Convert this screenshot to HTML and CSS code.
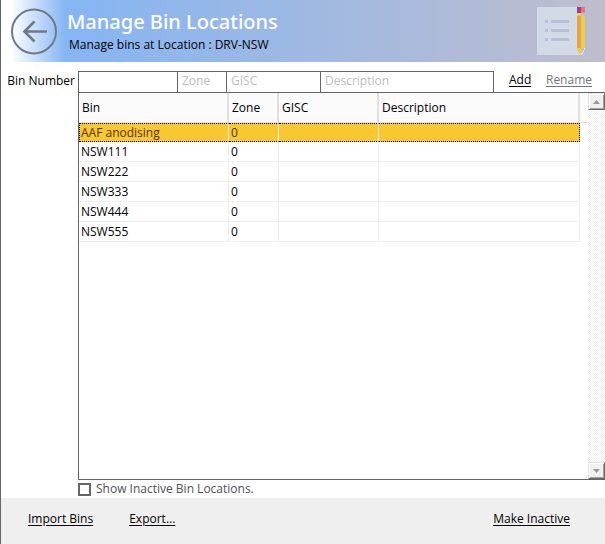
FILE: index.html
```html
<!DOCTYPE html>
<html lang="en">
<head>
    <meta charset="UTF-8">
    <meta name="viewport" content="width=device-width, initial-scale=1.0">
    <title>Manage Bin Locations</title>
    <link rel="stylesheet" href="styles.css">
</head>
<body>

    <div class="header">
        <button class="back" type="button" aria-label="Back">
            <svg width="48" height="48" viewBox="0 0 48 48" fill="none" stroke="#6f7a88">
                <circle cx="24" cy="24.5" r="22" stroke-width="2"/>
                <path d="M37 24.5H15M24.5 14.5L14.5 24.5L24.5 34.5" stroke-width="2.6"/>
            </svg>
        </button>
        <div class="titles">
            <h1>Manage Bin Locations</h1>
            <p>Manage bins at Location : DRV-NSW</p>
        </div>
        <svg class="notepad" width="50" height="48" viewBox="0 0 50 48" shape-rendering="crispEdges">
            <path fill="#d2d9e7" d="M0 0H40V41L43 48H0z"/>
            <path fill="#b9bfd5" d="M8 13h3v3H8zM14 13h18v3H14zM8 22h3v3H8zM14 22h18v3H14zM8 31h3v3H8zM14 31h18v3H14z"/>
            <path fill="#a33c8d" d="M40 0h4v6h-4z"/>
            <path fill="#ea7180" d="M44 0h4v5h-4z"/>
            <path fill="#e58a9c" d="M44 5h4v1h-4z"/>
            <path fill="#e9d044" d="M40 6h4v3h4v32h-4v7h-1l-3-6z"/>
            <path fill="#e8a34b" d="M40 9h4v32h-4z"/>
            <path fill="#eae6dc" d="M47 41h1v2h-1zM46 43h1v2h-1zM45 45h1v2h-1zM44 46h1v2h-1z"/>
        </svg>
    </div>

    <div class="content">
        <form class="bin-form">
            <label for="binNumber">Bin Number</label>
            <div class="fields">
                <input type="text" id="binNumber">
                <input type="text" placeholder="Zone" aria-label="Zone">
                <input type="text" placeholder="GISC" aria-label="GISC">
                <input type="text" placeholder="Description" aria-label="Description">
            </div>
            <div class="form-links">
                <a href="#">Add</a>
                <a href="#" class="disabled">Rename</a>
            </div>
        </form>

        <div class="bin-list">
            <div class="table-area">
                <table>
                    <colgroup>
                        <col class="col-bin">
                        <col class="col-zone">
                        <col class="col-gisc">
                        <col>
                        <col class="col-end">
                    </colgroup>
                    <thead>
                        <tr><th>Bin</th><th>Zone</th><th>GISC</th><th>Description</th><th></th></tr>
                    </thead>
                    <tbody>
                        <tr class="selected"><td>AAF anodising</td><td>0</td><td></td><td></td></tr>
                        <tr><td>NSW111</td><td>0</td><td></td><td></td></tr>
                        <tr><td>NSW222</td><td>0</td><td></td><td></td></tr>
                        <tr><td>NSW333</td><td>0</td><td></td><td></td></tr>
                        <tr><td>NSW444</td><td>0</td><td></td><td></td></tr>
                        <tr><td>NSW555</td><td>0</td><td></td><td></td></tr>
                    </tbody>
                </table>
            </div>
            <div class="scrollbar">
                <button type="button" aria-label="Scroll up">
                    <svg width="7" height="4" viewBox="0 0 7 4"><path d="M0 4L3.5 0L7 4z"/></svg>
                </button>
                <button type="button" aria-label="Scroll down">
                    <svg width="7" height="4" viewBox="0 0 7 4"><path d="M0 0L3.5 4L7 0z"/></svg>
                </button>
            </div>
        </div>

        <div class="inactive">
            <input type="checkbox" id="showInactive">
            <label for="showInactive">Show Inactive Bin Locations.</label>
        </div>
    </div>

    <div class="footer">
        <a href="#">Import Bins</a>
        <a href="#">Export...</a>
        <a href="#" class="right">Make Inactive</a>
    </div>

</body>
</html>
```

FILE: styles.css
```css
* {
    box-sizing: border-box;
}
body {
    display: flex;
    flex-direction: column;
    min-height: 100vh;
    margin: 0;
    border-left: 1px solid #646569;
    background: white;
    color: black;
    font-family: "Open Sans", "Noto Sans", sans-serif;
    font-size: 12px;
    line-height: 16px;
}
a {
    color: black;
    text-underline-offset: 2px;
}
.header {
    display: flex;
    height: 62px;
    padding: 7px 18px 0 9px;
    background: linear-gradient(to right, white 0, white 10px, #85b5f3 64px, #bfbdcd 100%);
}
.back {
    width: 48px;
    height: 48px;
    padding: 0;
    border: none;
    background: none;
    cursor: pointer;
}
.back svg {
    display: block;
}
.titles {
    flex: 1;
    padding: 3px 0 0 9px;
}
h1 {
    margin: 0;
    color: white;
    font-family: "Noto Sans", sans-serif;
    font-size: 20px;
    font-weight: 500;
    line-height: 24px;
}
.titles p {
    margin: 3px 0 0 2px;
}
.content {
    flex: 1;
    display: flex;
    flex-direction: column;
    padding-top: 9px;
}
.bin-form {
    display: flex;
    height: 21px;
}
.bin-form > label {
    width: 77px;
    padding: 2px 3px 0 0;
    text-align: right;
    white-space: nowrap;
}
.fields {
    flex: 1;
    display: grid;
    grid-template-columns: 98px 49px 94px 1fr;
    border: 1px solid #646569;
    border-bottom: none;
}
.fields input {
    min-width: 0;
    padding: 0 4px 3px;
    border: none;
    outline: none;
    background: white;
    font: inherit;
}
.fields input + input {
    border-left: 1px solid #646569;
}
.fields input::placeholder {
    color: #bebebe;
    opacity: 1;
}
.form-links {
    display: flex;
    justify-content: space-between;
    width: 111px;
    padding: 1px 13px 0 15px;
}
.disabled {
    color: #73747a;
}
.bin-list {
    flex: 1;
    display: flex;
    margin-left: 77px;
    border: 1px solid #646569;
    border-right: none;
}
.table-area {
    flex: 1;
}
table {
    width: 100%;
    table-layout: fixed;
    border-collapse: separate;
    border-spacing: 0;
}
.col-bin {
    width: 150px;
}
.col-zone {
    width: 50px;
}
.col-gisc {
    width: 100px;
}
.col-end {
    width: 8px;
}
th {
    height: 30px;
    padding: 0 3px;
    border-right: 2px solid #e0e0e0;
    border-bottom: 1px solid #e6e6e6;
    background: #fbfbfb;
    font-weight: normal;
    text-align: left;
}
th:last-child {
    padding: 0;
    border-right: none;
}
td {
    height: 20px;
    padding: 0 2px;
    border-right: 1px solid #eeeeee;
    border-bottom: 1px solid #eeeeee;
}
.selected td {
    height: 19px;
    border-top: 1px dotted black;
    border-bottom: 1px dotted black;
    background: #f8c832;
    color: #5a3206;
}
.selected td:first-child {
    padding-left: 1px;
    border-left: 1px dotted black;
}
.selected td:last-child {
    border-right: 1px dotted black;
}
.scrollbar {
    display: flex;
    flex-direction: column;
    justify-content: space-between;
    width: 17px;
    background: repeating-conic-gradient(#f0f0f0 0 25%, white 0 50%) 0 0 / 2px 2px;
}
.scrollbar button {
    display: flex;
    align-items: center;
    justify-content: center;
    width: 17px;
    height: 17px;
    padding: 0;
    border: 1px solid;
    border-color: #e3e3e3 #696969 #696969 #e3e3e3;
    box-shadow: inset 1px 1px white, inset -1px -1px #a0a0a0;
    background: #f0f0f0;
}
.scrollbar path {
    fill: #9a9a9a;
}
.inactive {
    display: flex;
    align-items: center;
    gap: 5px;
    height: 18px;
    margin-left: 77px;
    color: #505156;
}
.inactive input {
    appearance: none;
    width: 13px;
    height: 13px;
    margin: 0;
    border: 2px solid #646569;
    background: white;
}
.inactive input:checked {
    background: #646569;
    box-shadow: inset 0 0 0 2px white;
}
.footer {
    display: flex;
    gap: 36px;
    height: 46px;
    padding: 13px 35px 0 27px;
    background: #efefef;
}
.footer .right {
    margin-left: auto;
}
```
